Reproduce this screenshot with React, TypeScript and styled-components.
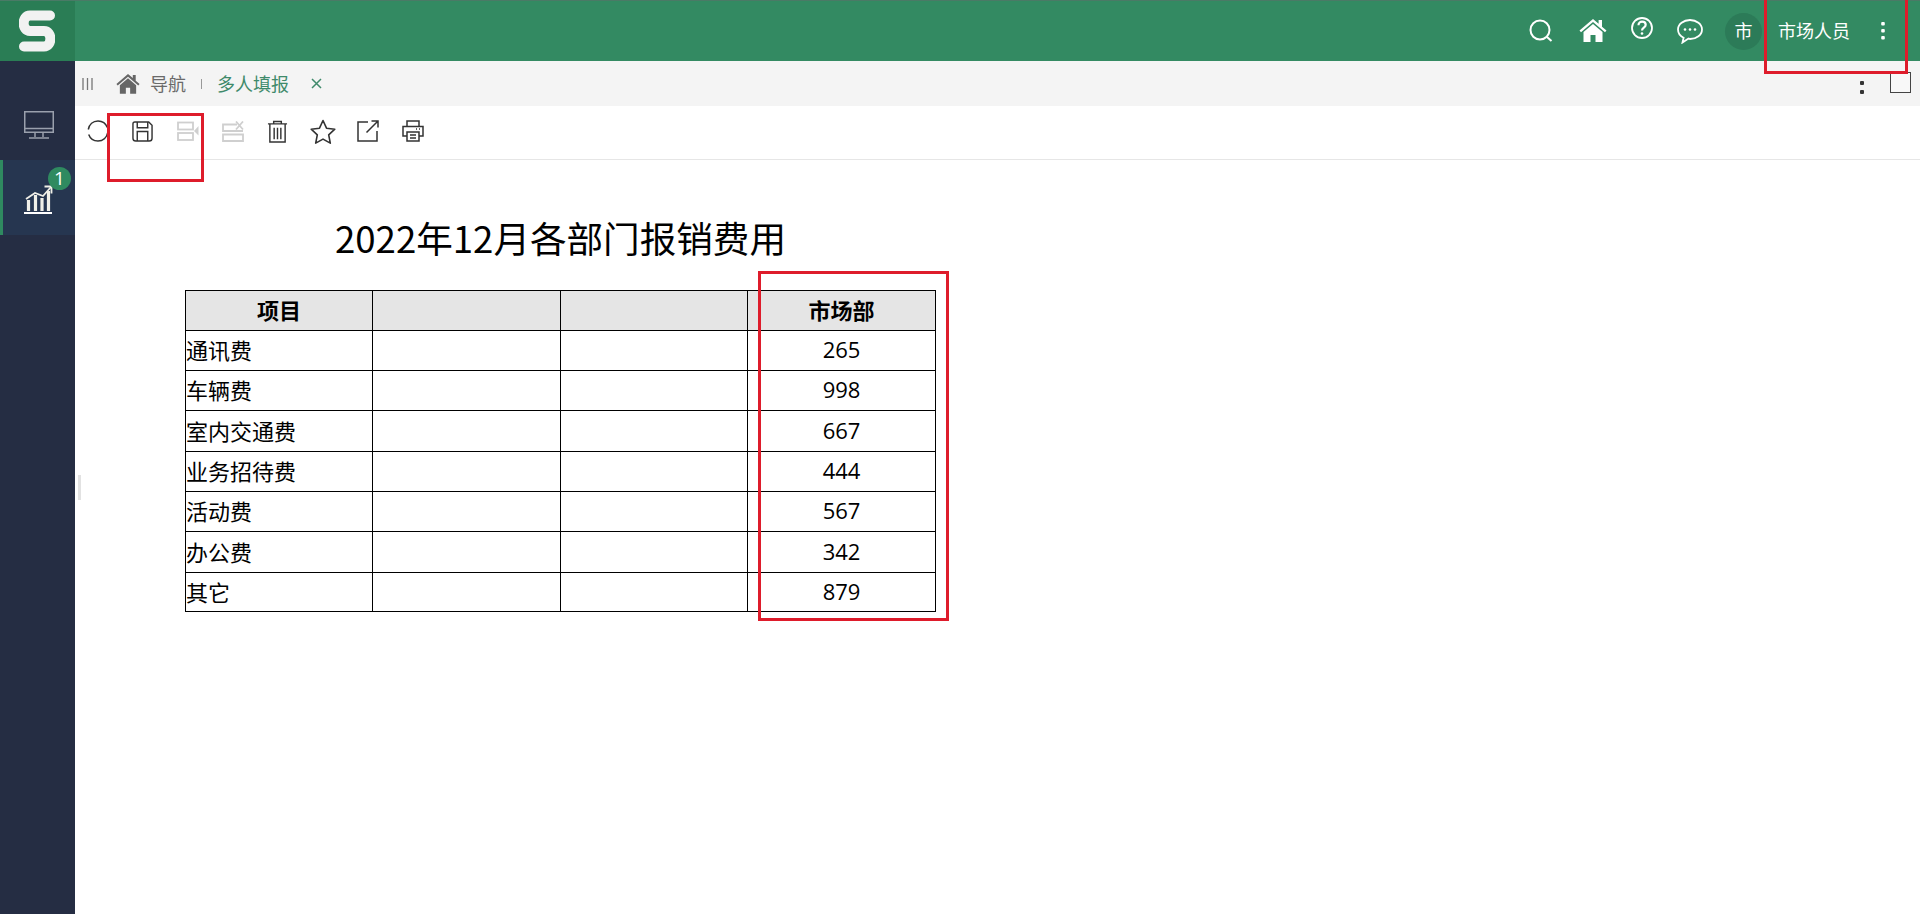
import React from "react";
import styled, { createGlobalStyle } from "styled-components";

const Global = createGlobalStyle`
  html, body { margin: 0; padding: 0; height: 100%; background: #fff; overflow: hidden; }
  #root { height: 100%; }
  * { box-sizing: border-box; }
`;

const FONT = `"Noto Sans CJK SC", "Open Sans", sans-serif`;

const Page = styled.div`
  position: relative;
  width: 1920px;
  height: 914px;
  overflow: hidden;
  display: flex;
  flex-direction: column;
  font-family: ${FONT};
`;

const Header = styled.header`
  height: 61px;
  flex: none;
  display: flex;
  align-items: center;
  background: #338a62;
  border-top: 1px solid #4a7a66;
  color: #fff;
`;

const LogoBox = styled.div`
  width: 75px;
  height: 100%;
  padding-right: 2px;
  background: #2a7d55;
  display: flex;
  align-items: center;
  justify-content: center;
`;

const Spacer = styled.div`
  flex: 1;
`;

const IconSlot = styled.span<{ $mr?: number; $ml?: number; $dy?: number }>`
  display: flex;
  flex: none;
  margin-left: ${(p) => p.$ml ?? 0}px;
  margin-right: ${(p) => p.$mr ?? 0}px;
  transform: translateY(${(p) => p.$dy ?? 0}px);
`;

const Avatar = styled.div`
  width: 37px;
  height: 37px;
  border-radius: 50%;
  background: #2c7b58;
  display: flex;
  align-items: center;
  justify-content: center;
  font-size: 18px;
  line-height: 34px;
  padding-bottom: 2px;
  margin-right: 16px;
`;

const UserName = styled.span`
  font-size: 18px;
  line-height: 24px;
  margin-right: 30px;
  margin-bottom: 2px;
  width: 72px;
  white-space: nowrap;
`;

const Body = styled.div`
  flex: 1;
  display: flex;
  min-height: 0;
`;

const Sidebar = styled.aside`
  width: 75px;
  flex: none;
  background: #252d43;
  display: flex;
  flex-direction: column;
`;

const NavItem = styled.div<{ $active?: boolean; $h: number; $pt: number }>`
  position: relative;
  height: ${(p) => p.$h}px;
  padding-top: ${(p) => p.$pt}px;
  display: flex;
  align-items: center;
  justify-content: center;
  background: ${(p) => (p.$active ? "#263650" : "transparent")};
  border-left: 3px solid ${(p) => (p.$active ? "#2f8a60" : "transparent")};
`;

const Badge = styled.span`
  position: absolute;
  left: 45px;
  top: 7px;
  width: 23px;
  height: 23px;
  border-radius: 50%;
  background: #2f8a60;
  color: #fff;
  font-size: 19px;
  line-height: 23px;
  text-align: center;
  font-family: "Open Sans", sans-serif;
`;

const Main = styled.main`
  position: relative;
  flex: 1;
  min-width: 0;
  display: flex;
  flex-direction: column;
`;

const TabBar = styled.div`
  height: 45px;
  flex: none;
  background: #f4f4f4;
  display: flex;
  align-items: center;
  padding-left: 7px;
  font-size: 18px;
`;

const TabLabel = styled.span<{ $green?: boolean }>`
  color: ${(p) => (p.$green ? "#3f8a6b" : "#6a6a6a")};
  line-height: 24px;
  margin-bottom: 2px;
  white-space: nowrap;
`;

const TabDivider = styled.span`
  width: 1px;
  height: 10px;
  background: #999;
  margin: 0 15px;
`;

const TabTools = styled.div`
  margin-left: auto;
  margin-right: 9px;
  display: flex;
  align-items: center;
  gap: 26px;
`;

const TabDots = styled.span`
  display: flex;
  flex-direction: column;
  gap: 5px;
  margin-top: 8px;
  & i {
    width: 4px;
    height: 4px;
    background: #333;
    border-radius: 1px;
  }
`;

const MaxButton = styled.span`
  width: 21px;
  height: 21px;
  border: 1px solid #444;
  background: #f8f8f8;
  margin-bottom: 2px;
`;

const Toolbar = styled.div`
  height: 54px;
  flex: none;
  display: flex;
  align-items: flex-start;
  padding: 13px 0 0 12px;
  gap: 23px;
  border-bottom: 1px solid #e6e6e6;
`;

const ToolIcon = styled.span<{ $shift?: number }>`
  display: flex;
  width: 22px;
  height: 24px;
  align-items: center;
  justify-content: center;
  transform: translateX(${(p) => p.$shift ?? 0}px);
  & svg {
    flex: none;
  }
`;

const Sheet = styled.div`
  padding: 0 0 0 110px;
  color: #000;
`;

const Title = styled.h1`
  margin: 0;
  height: 130px;
  width: 750px;
  padding: 53px 0 0 150px;
  font-size: 36.6px;
  font-weight: 400;
  line-height: 50px;
  white-space: nowrap;
`;

const ReportTable = styled.table`
  border-collapse: collapse;
  table-layout: fixed;
  width: 750px;
  font-size: 22px;
`;

const Row = styled.tr<{ $h: number }>`
  height: ${(p) => p.$h}px;
`;

const HeadCell = styled.th`
  border: 1px solid #000;
  background: #e5e5e5;
  font-weight: 700;
  text-align: center;
  padding: 0 0 3px;
  line-height: 30px;
`;

const Cell = styled.td<{ $num?: boolean }>`
  border: 1px solid #000;
  padding: 0 0 3px;
  line-height: 30px;
  text-align: ${(p) => (p.$num ? "center" : "left")};
  font-family: ${(p) => (p.$num ? `"Open Sans", ${FONT}` : FONT)};
`;

const Handle = styled.span`
  position: absolute;
  left: 3px;
  top: 414px;
  width: 3px;
  height: 25px;
  background: #e2e2e2;
`;

const Annotation = styled.div<{ $x: number; $y: number; $w: number; $h: number }>`
  position: absolute;
  left: ${(p) => p.$x}px;
  top: ${(p) => p.$y}px;
  width: ${(p) => p.$w}px;
  height: ${(p) => p.$h}px;
  border: 3px solid #de1c2b;
  pointer-events: none;
`;

const G = "#333";
const D = "#cfcfcf";

const Logo = () => (
  <svg width="36" height="42" viewBox="0 0 36 42" fill="none">
    <path d="M31 5.500H11C2.500 5.500 2.500 21 11 21H25C33.500 21 33.500 36.500 25 36.500H5" stroke="#f2f2f2" strokeWidth="10" strokeLinecap="round" strokeLinejoin="round" />
  </svg>
);

const SearchIcon = () => (
  <svg width="24" height="24" viewBox="0 0 24 24" fill="none" stroke="#fff" strokeWidth="2">
    <circle cx="11" cy="11" r="9.500" />
    <path d="M18 18l4.500 4" />
  </svg>
);

const HomeIcon = ({ c = "#fff", w = 28, h = 24 }: { c?: string; w?: number; h?: number }) => (
  <svg width={w} height={h} viewBox="0 0 28 24">
    <path fill={c} d="M14 1 0.500 12.500 2 14.200 14 4 26 14.200l1.500-1.700L23 8.700V2h-3.400v3.700zM14 6 4.500 14v10h7v-7h5v7h7V14z" />
  </svg>
);

const HelpIcon = () => (
  <svg width="22" height="22" viewBox="0 0 22 22" fill="none" stroke="#fff" strokeWidth="1.800">
    <circle cx="11" cy="11" r="10" />
    <path d="M7.500 8.200c0-5 7.200-4.400 7.200-.4 0 2.800-3.700 2.800-3.700 5.600" strokeWidth="2.200" />
    <circle cx="11" cy="16.500" r="1.300" fill="#fff" stroke="none" />
  </svg>
);

const ChatIcon = () => (
  <svg width="26" height="25" viewBox="0 0 26 25" fill="none" stroke="#fff" strokeWidth="1.800">
    <path d="M13 1C6.500 1 1 5 1 10.500c0 3.700 2.400 6.600 5.600 8.200L5.500 23.500l6-4C12 19.700 12.500 20 13 20c6.500 0 12-4 12-9.500S19.500 1 13 1z" />
    <circle cx="8" cy="10.500" r="1.300" fill="#fff" stroke="none" />
    <circle cx="13" cy="10.500" r="1.300" fill="#fff" stroke="none" />
    <circle cx="18" cy="10.500" r="1.300" fill="#fff" stroke="none" />
  </svg>
);

const VDots = () => (
  <svg width="6" height="20" viewBox="0 0 6 20" fill="#fff">
    <rect x="1.200" y="1" width="3.600" height="3.600" rx="1" />
    <rect x="1.200" y="8" width="3.600" height="3.600" rx="1" />
    <rect x="1.200" y="15" width="3.600" height="3.600" rx="1" />
  </svg>
);

const MonitorIcon = () => (
  <svg width="30" height="28" viewBox="0 0 30 28" fill="none" stroke="#9aa0ad" strokeWidth="1.500">
    <rect x="0.750" y="0.750" width="28.500" height="20.500" />
    <path d="M0.750 17.500h28.500M11 21.500v4.500M19 21.500v4.500M5 27h20" />
  </svg>
);

const ChartIcon = () => (
  <svg width="30" height="30" viewBox="0 0 30 30" fill="none">
    <path d="M0 28h28" stroke="#fff" strokeWidth="2" />
    <path d="M4.500 26V15M11.500 26V10M18 26V13M24.500 26V6" stroke="#f0f0e8" strokeWidth="3.200" />
    <path d="M2 14 11 8l8 3 8-9" stroke="#f0f0e8" strokeWidth="1.800" />
    <path d="M20.500 1.500h7v7" stroke="#f0f0e8" strokeWidth="1.800" />
  </svg>
);

const BarsIcon = () => (
  <svg width="11" height="12" viewBox="0 0 11 12" stroke="#777" strokeWidth="1.300">
    <path d="M1 0v12M5.500 0v12M10 0v12" />
  </svg>
);

const CloseIcon = () => (
  <svg width="11" height="11" viewBox="0 0 11 11" stroke="#3f8a6b" strokeWidth="1.500">
    <path d="M1 1l9 9M10 1l-9 9" />
  </svg>
);

const RefreshIcon = () => (
  <svg width="22" height="22" viewBox="0 0 22 22" fill="none" stroke={G} strokeWidth="1.500">
    <path d="M1.300 9.500C2.200 4.500 6 1 11 1c4.400 0 7.900 2.600 9.300 6.500" />
    <path d="M20.800 12.500C19.800 17.500 16 21 11 21c-4.400 0-7.900-2.600-9.300-6.500" />
  </svg>
);

const SaveIcon = () => (
  <svg width="21" height="21" viewBox="0 0 22 22" fill="none" stroke={G} strokeWidth="1.500">
    <path d="M3 1h14.500L21 4.500V18a3 3 0 0 1-3 3H4a3 3 0 0 1-3-3V3a2 2 0 0 1 2-2z" />
    <path d="M5.500 1v6h11V1M5.500 21V11h11v10" />
  </svg>
);

const AddRowIcon = () => (
  <svg width="22" height="20" viewBox="0 0 22 20" fill="none" stroke={D} strokeWidth="1.800">
    <rect x="1" y="1.500" width="15" height="7" />
    <rect x="1" y="12" width="15" height="7" />
    <path d="M21.500 5v9.500L17 10z" fill={D} stroke="none" />
  </svg>
);

const DelRowIcon = () => (
  <svg width="22" height="21" viewBox="0 -1 22 21" fill="none" stroke={D} strokeWidth="1.800">
    <path d="M15 2.500H1v6.500h20M1 12.500h20v6.500H1z" />
    <path d="M14 -0.500l7 8M21 -0.500l-7 8" />
  </svg>
);

const TrashIcon = () => (
  <svg width="21" height="23" viewBox="0 0 22 24" fill="none" stroke={G} strokeWidth="1.500">
    <path d="M1 4h20M7 4V1.500h8V4M3 4v19h16V4M7.500 8v12M11 8v12M14.500 8v12" />
  </svg>
);

const StarIcon = () => (
  <svg width="26" height="25" viewBox="0 0 26 25" fill="none" stroke={G} strokeWidth="1.600" strokeLinejoin="round">
    <path d="M13 1.500l3.500 7.700 8.300 1-6.100 5.700 1.600 8.200L13 20.100l-7.300 4 1.600-8.200L1.200 10.200l8.300-1z" />
  </svg>
);

const ExportIcon = () => (
  <svg width="22" height="22" viewBox="0 0 22 22" fill="none" stroke={G} strokeWidth="1.500">
    <path d="M11 2H1v19h19V11M9.500 12.500 21 1M14.500 1H21v6.500" />
  </svg>
);

const PrintIcon = () => (
  <svg width="22" height="22" viewBox="0 0 22 22" fill="none" stroke={G} strokeWidth="1.500">
    <path d="M5 6V1h12v5M5 16H1V6.500h20V16h-4" />
    <path d="M5 12h12v9H5zM8 15h6M8 18h6" />
    <path d="M14 9h1M17 9h1" />
  </svg>
);

const rows: [string, string][] = [
  ["通讯费", "265"],
  ["车辆费", "998"],
  ["室内交通费", "667"],
  ["业务招待费", "444"],
  ["活动费", "567"],
  ["办公费", "342"],
  ["其它", "879"],
];
const heights = [40, 40, 41, 40, 40, 41, 39];

export default function App() {
  return (
    <Page>
      <Global />
      <Header>
        <LogoBox>
          <Logo />
        </LogoBox>
        <Spacer />
        <IconSlot $mr={26}><SearchIcon /></IconSlot>
        <IconSlot $mr={24} $dy={-1}><HomeIcon /></IconSlot>
        <IconSlot $mr={24} $dy={-3}><HelpIcon /></IconSlot>
        <IconSlot $mr={22}><ChatIcon /></IconSlot>
        <Avatar>市</Avatar>
        <UserName>市场人员</UserName>
        <IconSlot $mr={34}><VDots /></IconSlot>
      </Header>
      <Body>
        <Sidebar>
          <NavItem $h={99} $pt={29}><MonitorIcon /></NavItem>
          <NavItem $h={75} $pt={5} $active>
            <ChartIcon />
            <Badge>1</Badge>
          </NavItem>
        </Sidebar>
        <Main>
          <TabBar>
            <BarsIcon />
            <IconSlot $ml={23} $mr={10}><HomeIcon c="#666" w={24} h={21} /></IconSlot>
            <TabLabel>导航</TabLabel>
            <TabDivider />
            <TabLabel $green>多人填报</TabLabel>
            <IconSlot $ml={22}><CloseIcon /></IconSlot>
            <TabTools>
              <TabDots><i /><i /></TabDots>
              <MaxButton />
            </TabTools>
          </TabBar>
          <Toolbar>
            <ToolIcon><RefreshIcon /></ToolIcon>
            <ToolIcon $shift={-1}><SaveIcon /></ToolIcon>
            <ToolIcon><AddRowIcon /></ToolIcon>
            <ToolIcon><DelRowIcon /></ToolIcon>
            <ToolIcon $shift={-1}><TrashIcon /></ToolIcon>
            <ToolIcon><StarIcon /></ToolIcon>
            <ToolIcon><ExportIcon /></ToolIcon>
            <ToolIcon><PrintIcon /></ToolIcon>
          </Toolbar>
          <Sheet>
            <Title>2022年12月各部门报销费用</Title>
            <ReportTable>
              <colgroup>
                <col width="187" />
                <col width="188" />
                <col width="187" />
                <col width="188" />
              </colgroup>
              <tbody>
                <Row $h={40}>
                  <HeadCell>项目</HeadCell>
                  <HeadCell />
                  <HeadCell />
                  <HeadCell>市场部</HeadCell>
                </Row>
                {rows.map(([name, value], i) => (
                  <Row key={name} $h={heights[i]}>
                    <Cell>{name}</Cell>
                    <Cell />
                    <Cell />
                    <Cell $num>{value}</Cell>
                  </Row>
                ))}
              </tbody>
            </ReportTable>
          </Sheet>
          <Handle />
        </Main>
      </Body>
      <Annotation $x={107} $y={113} $w={97} $h={69} />
      <Annotation $x={758} $y={271} $w={191} $h={350} />
      <Annotation $x={1764} $y={-3} $w={144} $h={77} />
    </Page>
  );
}
